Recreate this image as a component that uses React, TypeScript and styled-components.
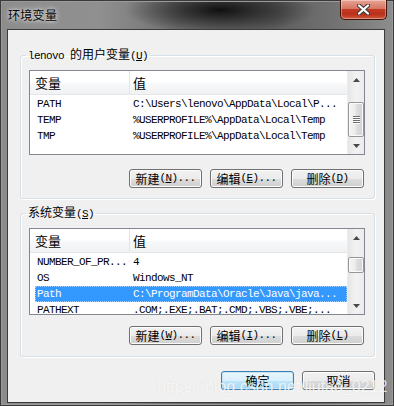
import React from "react"
import styled, { createGlobalStyle, css } from "styled-components"

const cjk = `"Noto Sans CJK SC", "Noto Sans", sans-serif`
const mono = `"Liberation Mono", "Noto Sans CJK SC", monospace`

const GlobalStyle = createGlobalStyle`
  * { box-sizing: border-box; }
  html, body { margin: 0; padding: 0; background: #7a7a7a; }
  body { width: 394px; height: 406px; overflow: hidden; }
`

type Row = { name: string; value: string; selected?: boolean }

const userVars: Row[] = [
  { name: "PATH", value: "C:\\Users\\lenovo\\AppData\\Local\\P..." },
  { name: "TEMP", value: "%USERPROFILE%\\AppData\\Local\\Temp" },
  { name: "TMP", value: "%USERPROFILE%\\AppData\\Local\\Temp" },
]

const systemVars: Row[] = [
  { name: "NUMBER_OF_PR...", value: "4" },
  { name: "OS", value: "Windows_NT" },
  { name: "Path", value: "C:\\ProgramData\\Oracle\\Java\\java...", selected: true },
  { name: "PATHEXT", value: ".COM;.EXE;.BAT;.CMD;.VBS;.VBE;..." },
]

const Hotkey = ({ k, dots }: { k: string; dots?: boolean }) => (
  <Mono>
    (<u>{k}</u>){dots ? "..." : ""}
  </Mono>
)

type VarListProps = { rows: Row[]; height: number; thumbTop: number; thumbSize: number }
const VarList = ({ rows, height, thumbTop, thumbSize }: VarListProps) => (
  <List $height={height}>
    <ListBody>
      <Header>
        <HeaderCell $first>变量</HeaderCell>
        <HeaderCell>值</HeaderCell>
      </Header>
      <Rows>
        {rows.map((r) => (
          <ItemRow key={r.name} $selected={r.selected}>
            <NameCell>{r.name}</NameCell>
            <ValueCell>{r.value}</ValueCell>
          </ItemRow>
        ))}
      </Rows>
    </ListBody>
    <ScrollBar>
      <ArrowButton>
        <svg width="7" height="4" viewBox="0 0 7 4">
          <path d="M3.5 0 L7 4 L0 4 Z" fill="#4a4a4a" />
        </svg>
      </ArrowButton>
      <Track>
        <Thumb $top={thumbTop} $size={thumbSize}>
          {thumbSize > 20 && (
            <Grip>
              <i />
              <i />
              <i />
              <i />
            </Grip>
          )}
        </Thumb>
      </Track>
      <ArrowButton>
        <svg width="7" height="4" viewBox="0 0 7 4">
          <path d="M0 0 L7 0 L3.5 4 Z" fill="#4a4a4a" />
        </svg>
      </ArrowButton>
    </ScrollBar>
  </List>
)

export default function App() {
  return (
    <>
      <GlobalStyle />
      <Window>
        <TitleBar>
          <Title>环境变量</Title>
          <CloseButton>
            <svg width="13" height="11" viewBox="0 0 13 11">
              <path d="M2 1.5 L11 9.5 M11 1.5 L2 9.5" stroke="#3a3a3a" strokeWidth="4.2" strokeLinecap="round" />
              <path d="M2 1.5 L11 9.5 M11 1.5 L2 9.5" stroke="#ffffff" strokeWidth="2.2" strokeLinecap="round" />
            </svg>
          </CloseButton>
        </TitleBar>
        <Client>
          <Group>
            <Legend>
              <Mono>lenovo </Mono>的用户变量<Hotkey k="U" />
            </Legend>
            <VarList rows={userVars} height={85} thumbTop={14} thumbSize={35} />
            <ButtonRow $top={14}>
              <Button>新建<Hotkey k="N" dots /></Button>
              <Button>编辑<Hotkey k="E" dots /></Button>
              <Button>删除<Hotkey k="D" /></Button>
            </ButtonRow>
          </Group>
          <Group $top={6} $bottom={11}>
            <Legend>
              系统变量<Hotkey k="S" />
            </Legend>
            <VarList rows={systemVars} height={87} thumbTop={11} thumbSize={16} />
            <ButtonRow $top={11}>
              <Button>新建<Hotkey k="W" dots /></Button>
              <Button>编辑<Hotkey k="I" dots /></Button>
              <Button>删除<Hotkey k="L" /></Button>
            </ButtonRow>
          </Group>
          <Footer>
            <Button $primary>确定</Button>
            <Button>取消</Button>
          </Footer>
        </Client>
        <Watermark>https://blog.csdn.net/liutao_0212</Watermark>
      </Window>
    </>
  )
}

const Window = styled.div`
  position: relative;
  width: 394px;
  height: 406px;
  display: flex;
  flex-direction: column;
  padding: 0 9px 7px 7px;
  background:
    radial-gradient(ellipse 95px 24px at 220px 10px, rgba(12, 12, 12, 0.95), rgba(12, 12, 12, 0) 100%),
    linear-gradient(90deg, #8c8c8c 0%, #909090 25%, #707070 45%, #5e5e5e 70%, #767676 88%, #8e8e8e 100%);
  box-shadow: inset 0 0 0 1px #3a3a3a, inset 0 0 0 2px #9a9a9a;
`

const TitleBar = styled.div`
  height: 29px;
  flex: none;
  display: flex;
  justify-content: space-between;
  align-items: flex-start;
`

const Title = styled.div`
  margin: 8px 0 0 1px;
  font-family: ${cjk};
  font-size: 12px;
  line-height: 14px;
  letter-spacing: 0.3px;
  color: #000;
  text-shadow: 0 0 6px rgba(255, 255, 255, 0.9), 0 0 3px rgba(255, 255, 255, 0.7);
`

const CloseButton = styled.div`
  width: 47px;
  height: 20px;
  margin-right: -2px;
  display: flex;
  align-items: center;
  justify-content: center;
  border: 1px solid #3e130b;
  border-top: none;
  border-radius: 0 0 5px 5px;
  background: linear-gradient(#e8a597 0%, #d67562 45%, #c23b24 50%, #b9301b 75%, #d0593e 100%);
  box-shadow: inset 0 0 0 1px rgba(255, 255, 255, 0.35);
`

const Client = styled.div`
  flex: 1;
  display: flex;
  flex-direction: column;
  border: 1px solid #3b3b3b;
  background: #f0f0f0;
  padding: 17px 9px 12px 12px;
`

const Group = styled.fieldset<{ $top?: number; $bottom?: number }>`
  margin: ${(p) => p.$top ?? 0}px 0 0 0;
  padding: 7px 9px ${(p) => p.$bottom ?? 10}px 8px;
  min-width: 0;
  border: 1px solid #d5dfe5;
  border-radius: 3px;
  box-shadow: inset 1px 1px 0 #fff, 1px 1px 0 #fff;
`

const Legend = styled.legend`
  margin-left: -3px;
  padding: 0 2px;
  font-family: ${cjk};
  font-size: 12px;
  line-height: 14px;
  color: #000;
`

const Mono = styled.span`
  font-family: ${mono};
  font-size: 11px;
  letter-spacing: -0.6px;
  white-space: pre;
  u {
    text-underline-offset: 1px;
  }
`

const List = styled.div<{ $height: number }>`
  height: ${(p) => p.$height}px;
  display: flex;
  border: 1px solid #828790;
  background: #fff;
  overflow: hidden;
`

const ListBody = styled.div`
  flex: 1;
  min-width: 0;
  display: flex;
  flex-direction: column;
  overflow: hidden;
`

const Header = styled.div`
  height: 24px;
  flex: none;
  display: flex;
  border-bottom: 1px solid #e5e5e5;
  background: linear-gradient(#ffffff 0%, #ffffff 45%, #f6f7f8 60%, #f1f2f4 100%);
`

const HeaderCell = styled.div<{ $first?: boolean }>`
  display: flex;
  align-items: center;
  font-family: ${cjk};
  font-size: 13px;
  color: #000;
  ${(p) =>
    p.$first
      ? css`
          width: 100px;
          padding-left: 5px;
          border-right: 1px solid #e3e5e8;
        `
      : css`
          flex: 1;
          padding-left: 3px;
        `}
`

const Rows = styled.div`
  padding-top: 1px;
`

const ItemRow = styled.div<{ $selected?: boolean }>`
  height: 16px;
  margin-left: 5px;
  display: flex;
  align-items: center;
  font-family: ${mono};
  font-size: 11px;
  letter-spacing: -0.6px;
  white-space: pre;
  color: ${(p) => (p.$selected ? "#fff" : "#000")};
  background: ${(p) => (p.$selected ? "#3399ff" : "transparent")};
  outline: ${(p) => (p.$selected ? "1px dotted #9fd0ff" : "none")};
  outline-offset: -1px;
`

const NameCell = styled.div`
  width: 96px;
  flex: none;
  padding-left: 2px;
  overflow: hidden;
`

const ValueCell = styled.div`
  flex: 1;
  padding-left: 2px;
  overflow: hidden;
`

const ScrollBar = styled.div`
  width: 17px;
  flex: none;
  display: flex;
  flex-direction: column;
  background: linear-gradient(90deg, #e6e6e6 0%, #f2f2f2 50%, #ececec 100%);
  border-left: 1px solid #ededed;
`

const ArrowButton = styled.div`
  height: 17px;
  flex: none;
  display: flex;
  align-items: center;
  justify-content: center;
`

const Track = styled.div`
  flex: 1;
  display: flex;
  flex-direction: column;
`

const Thumb = styled.div<{ $top: number; $size: number }>`
  margin: ${(p) => p.$top}px 0 0 0;
  height: ${(p) => p.$size}px;
  display: flex;
  align-items: center;
  justify-content: center;
  border: 1px solid #979797;
  border-radius: 2px;
  background: linear-gradient(90deg, #f4f4f4 0%, #ececec 45%, #dddddd 55%, #d2d2d2 100%);
  box-shadow: inset 0 0 0 1px #fafafa;
`

const Grip = styled.div`
  display: flex;
  flex-direction: column;
  gap: 1px;
  i {
    display: block;
    width: 7px;
    height: 1px;
    background: #707070;
    box-shadow: 0 1px 0 #fdfdfd;
  }
`

const ButtonRow = styled.div<{ $top: number }>`
  margin-top: ${(p) => p.$top}px;
  display: flex;
  justify-content: flex-end;
  gap: 8px;
  padding-right: 1px;
`

const Footer = styled.div`
  margin-top: 14px;
  display: flex;
  justify-content: flex-end;
  gap: 8px;
`

const Button = styled.button<{ $primary?: boolean }>`
  width: 73px;
  height: 19px;
  padding: 0;
  display: flex;
  align-items: center;
  justify-content: center;
  font-family: ${cjk};
  font-size: 12px;
  line-height: 17px;
  color: #000;
  border-radius: 3px;
  border: 1px solid ${(p) => (p.$primary ? "#3c7fb1" : "#707070")};
  background: ${(p) =>
    p.$primary
      ? "linear-gradient(#eaf6fd 0%, #d9f0fc 50%, #bee6fd 51%, #a7d9f5 100%)"
      : "linear-gradient(#f2f2f2 0%, #ebebeb 50%, #dddddd 51%, #cfcfcf 100%)"};
  box-shadow: inset 0 0 0 1px ${(p) => (p.$primary ? "#c4e5f6" : "#fcfcfc")};
`

const Watermark = styled.div`
  position: absolute;
  left: 157px;
  top: 378px;
  font-family: "Liberation Sans", Arial, sans-serif;
  font-size: 16px;
  line-height: 18px;
  color: rgba(255, 255, 255, 0.75);
  text-shadow: 0 0 1px rgba(150, 150, 150, 0.25);
  pointer-events: none;
  white-space: nowrap;
`
